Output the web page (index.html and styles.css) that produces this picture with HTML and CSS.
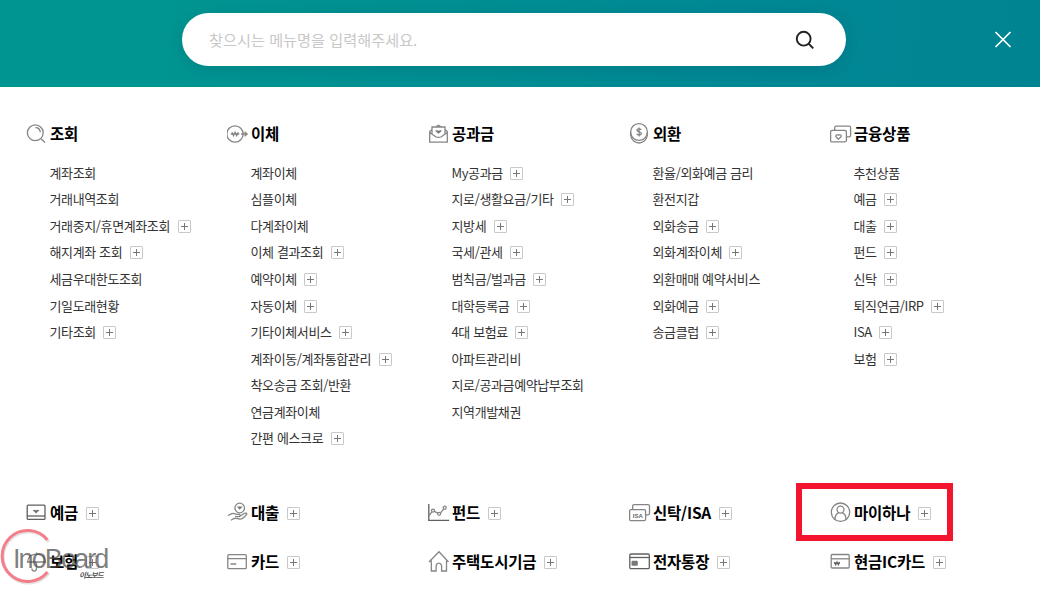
FILE: index.html
```
<!DOCTYPE html>
<html lang="ko">

<head>
    <meta charset="UTF-8">
    <meta name="viewport" content="width=device-width, initial-scale=1.0">
    <title>전체메뉴</title>
    <link rel="stylesheet" href="styles.css">
</head>

<body>
    <header class="top">
        <form class="search">
            <input type="text" placeholder="찾으시는 메뉴명을 입력해주세요.">
            <button type="button" class="search-btn" aria-label="검색">
                <svg width="20" height="20" viewBox="0 0 20 20"><circle cx="8.7" cy="8.7" r="6.9"/><path d="M13.5 13.5l4.7 4.9"/></svg>
            </button>
        </form>
        <button type="button" class="close-btn" aria-label="닫기">
            <svg width="18" height="18" viewBox="0 0 18 18"><path d="M1.500 1l15 15M16.500 1l-15 15"/></svg>
        </button>
    </header>

    <main class="sitemap">
        <div class="menu">
            <section>
                <h2><svg class="icon" viewBox="0 0 24 24"><circle cx="9.300" cy="10.800" r="7.900"/><path d="M15 16.700l4 3.800M9.500 5.500c2.800.2 4.600 2 4.800 4.800"/></svg>조회</h2>
                <ul>
                    <li>계좌조회</li>
                    <li>거래내역조회</li>
                    <li>거래중지/휴면계좌조회<i class="plus"></i></li>
                    <li>해지계좌 조회<i class="plus"></i></li>
                    <li>세금우대한도조회</li>
                    <li>기일도래현황</li>
                    <li>기타조회<i class="plus"></i></li>
                </ul>
            </section>
            <section>
                <h2><svg class="icon" viewBox="0 0 24 24"><circle cx="8" cy="12" r="8.200"/><path d="M14 12h6M17.600 9.700l2.500 2.300-2.500 2.300M3.800 12h8.500M5 10.200l1.500 3.400 1.600-3.400 1.600 3.400 1.500-3.400"/></svg>이체</h2>
                <ul>
                    <li>계좌이체</li>
                    <li>심플이체</li>
                    <li>다계좌이체</li>
                    <li>이체 결과조회<i class="plus"></i></li>
                    <li>예약이체<i class="plus"></i></li>
                    <li>자동이체<i class="plus"></i></li>
                    <li>기타이체서비스<i class="plus"></i></li>
                    <li>계좌이동/계좌통합관리<i class="plus"></i></li>
                    <li>착오송금 조회/반환</li>
                    <li>연금계좌이체</li>
                    <li>간편 에스크로<i class="plus"></i></li>
                </ul>
            </section>
            <section>
                <h2><svg class="icon" viewBox="0 0 24 24"><path d="M4 7.500L1.700 9.500v10.700h17.600V9.500L17 7.500M4 12V5h13v7M8 4.800l2.500-1.600L13 4.800M1.700 10.500l6 4.200q2.800 1.500 5.600 0l6-4.200"/><path class="fill" d="M7 8.700q1.700-1 3.500 0 1.800-1 3.500 0l-3.500 3z"/></svg>공과금</h2>
                <ul>
                    <li>My공과금<i class="plus"></i></li>
                    <li>지로/생활요금/기타<i class="plus"></i></li>
                    <li>지방세<i class="plus"></i></li>
                    <li>국세/관세<i class="plus"></i></li>
                    <li>범칙금/벌과금<i class="plus"></i></li>
                    <li>대학등록금<i class="plus"></i></li>
                    <li>4대 보험료<i class="plus"></i></li>
                    <li>아파트관리비</li>
                    <li>지로/공과금예약납부조회</li>
                    <li>지역개발채권</li>
                </ul>
            </section>
            <section>
                <h2><svg class="icon" viewBox="0 0 24 24"><circle cx="10" cy="10" r="8.400"/><path d="M1.600 10v3.200c1.800 10.400 15 10.400 16.800 0V10"/><path d="M12.200 8c-.8-1.600-4.200-1.500-4.200.3 0 2.200 4.400 1.100 4.400 3.300 0 1.900-3.700 2-4.600.2M10.100 5.500v9"/></svg>외환</h2>
                <ul>
                    <li>환율/외화예금 금리</li>
                    <li>환전지갑</li>
                    <li>외화송금<i class="plus"></i></li>
                    <li>외화계좌이체<i class="plus"></i></li>
                    <li>외환매매 예약서비스</li>
                    <li>외화예금<i class="plus"></i></li>
                    <li>송금클럽<i class="plus"></i></li>
                </ul>
            </section>
            <section>
                <h2><svg class="icon" viewBox="0 0 24 24"><path d="M4.700 8V5.800q0-1.600 1.600-1.600h12.900q1.400 0 1.400 1.600v7.400q0 1.600-1.600 1.600h-2.500"/><rect x=".6" y="8.300" width="15.800" height="11.600" rx="1.500"/><path d="M8.500 17.200l-2.600-2.600q-.6-2.400 2.600-1.600 3.200-.8 2.600 1.600z"/></svg>금융상품</h2>
                <ul>
                    <li>추천상품</li>
                    <li>예금<i class="plus"></i></li>
                    <li>대출<i class="plus"></i></li>
                    <li>펀드<i class="plus"></i></li>
                    <li>신탁<i class="plus"></i></li>
                    <li>퇴직연금/IRP<i class="plus"></i></li>
                    <li>ISA<i class="plus"></i></li>
                    <li>보험<i class="plus"></i></li>
                </ul>
            </section>
        </div>

        <div class="menu more">
            <h2><svg class="icon" viewBox="0 0 24 24"><g class="dark"><rect x="1.200" y="4.200" width="17.800" height="14.200" rx="1"/><path d="M1.200 15h17.800"/></g><path class="fill" d="M6.800 9.200q1.600-1 3.300 0 1.700-1 3.300 0l-3.300 3.200z"/></svg>예금<i class="plus"></i></h2>
            <h2><svg class="icon" viewBox="0 0 24 24"><circle cx="12.700" cy="7" r="4.800"/><path class="fill" d="M9.800 5.500h5.800l-2.900 3.200z"/><path d="M.8 14.500l3.600-1.700q2.300-.9 4.300.4l3.500.1q2 .8.200 2.300H8M12.500 15.500l5-3.200q2.300-.8 2.300.8-3.800 5-6.800 5.100-3.400-1-6-.7L4 19.200"/></svg>대출<i class="plus"></i></h2>
            <h2><svg class="icon" viewBox="0 0 24 24"><path class="dark" d="M.8 3v16.300h20.400"/><path d="M1 14.500l3-3.600M6.300 10.400l3.500 1.800M12.600 11.800l3.200-4"/><circle cx="5" cy="9.600" r="1.500"/><circle cx="11.100" cy="12.800" r="1.500"/><circle cx="16.700" cy="6.700" r="1.500"/></svg>펀드<i class="plus"></i></h2>
            <h2><svg class="icon" viewBox="0 0 24 24"><path d="M3.700 8.500V5.200q0-1.500 1.500-1.500h13.800q1.500 0 1.500 1.500v7q0 1.600-1.600 1.600h-2"/><rect x=".6" y="8.700" width="16" height="11" rx="1.500"/><text x="3.800" y="16.500">ISA</text></svg>신탁/ISA<i class="plus"></i></h2>
            <h2 class="marked"><svg class="icon" viewBox="0 0 24 24"><circle cx="10.500" cy="11.200" r="9.200"/><circle cx="10.500" cy="8.600" r="3.500"/><path d="M5 18.400c0-3.200.8-5.300 3.700-6.700M16 18.400c0-3.200-.8-5.300-3.700-6.700"/></svg>마이하나<i class="plus"></i></h2>
            <h2><svg class="icon" viewBox="0 0 24 24"><path d="M1.500 12c.8-10.500 17-10.500 18 0zM10.500 2.500V4M10.500 12v6.500q0 2.500-2.300 2.500t-2.300-2.500"/></svg>보험<i class="plus"></i></h2>
            <h2><svg class="icon" viewBox="0 0 24 24"><rect x=".8" y="4.700" width="18.500" height="14" rx="1.200"/><path d="M.8 8.700h18.500M3.500 14h5.800"/></svg>카드<i class="plus"></i></h2>
            <h2><svg class="icon" viewBox="0 0 24 24"><path d="M1 12L11 1.800 20.500 12M3.300 10.500V21h4.800v-5.500q.6-2.300 2.700-2.300t2.800 2.300V21h4.900V10.500"/></svg>주택도시기금<i class="plus"></i></h2>
            <h2><svg class="icon" viewBox="0 0 24 24"><g class="dark"><rect x=".8" y="4" width="19.500" height="14.700" rx="1.200"/><path d="M.8 7.500h19.500"/></g><rect class="fill" x="2.500" y="10.800" width="6.300" height="5" rx="1"/></svg>전자통장<i class="plus"></i></h2>
            <h2><svg class="icon" viewBox="0 0 24 24"><rect x="1.200" y="4.500" width="18" height="13.500" rx="1"/><path d="M1.200 8.800h18"/><path class="dark" d="M4.500 12l1.200 2.700 1.300-2.700 1.300 2.700 1.200-2.700M4 13.200h6"/></svg>현금IC카드<i class="plus"></i></h2>
        </div>
    </main>

    <div class="watermark">
        <svg width="56" height="60" viewBox="0 0 56 60"><path class="shade" d="M49 14A25.500 25.500 0 1 0 49 45"/><path class="ring" d="M47.500 12A25.500 25.500 0 1 0 47.500 44"/></svg>
        <span class="wm-name">InoBoard</span>
        <span class="wm-sub">이노보드</span>
    </div>
</body>

</html>
```
FILE: styles.css
```
*,
*::after {
    box-sizing: border-box;
}

body {
    margin: 0;
    height: 600px;
    overflow: hidden;
    position: relative;
    background-color: #fff;
    font-family: "Noto Sans CJK KR", sans-serif;
    color: #333;
}

h2,
ul {
    margin: 0;
    padding: 0;
}

button {
    padding: 0;
    border: none;
    background: none;
    cursor: pointer;
}

svg {
    display: block;
    fill: none;
}

/* search bar */
.top {
    display: flex;
    justify-content: space-between;
    align-items: center;
    height: 87px;
    padding: 0 28px 8px 182px;
    background: linear-gradient(100deg, #009590 15%, #008795 75%, #008492);
}

.search {
    display: flex;
    align-items: center;
    width: 664px;
    height: 53px;
    padding: 0 31px 0 27px;
    border-radius: 27px;
    background-color: #fff;
    box-shadow: 0 3px 14px rgba(0, 70, 90, 0.2);
}

.search input {
    flex: 1;
    padding: 0 0 2px;
    border: none;
    outline: none;
    font-family: inherit;
    font-size: 15.2px;
}

.search input::placeholder {
    color: #c8c8c8;
}

.search-btn svg {
    stroke: #222;
    stroke-width: 1.9;
}

.close-btn svg {
    stroke: #fff;
    stroke-width: 1.7;
}

/* menu columns */
.menu {
    display: grid;
    grid-template-columns: repeat(5, 201px);
    padding-left: 26px;
}

.menu:first-child {
    height: 402px;
    padding-top: 35px;
}

h2 {
    display: flex;
    align-items: center;
    height: 24px;
    padding-bottom: 2px;
    font-size: 15.5px;
    font-weight: 700;
    letter-spacing: -0.2px;
    color: #000;
    white-space: nowrap;
}

ul {
    padding: 14px 0 0 23.5px;
    list-style: none;
}

li {
    display: flex;
    align-items: center;
    height: 26.57px;
    padding-bottom: 2px;
    font-size: 13px;
    letter-spacing: -0.38px;
    white-space: nowrap;
}

.icon {
    flex: none;
    width: 24px;
    height: 24px;
    margin-top: 2px;
    stroke: #858585;
    stroke-width: 1.3;
}

.icon .dark {
    stroke: #606060;
}

.icon .fill {
    fill: #777;
    stroke: none;
}

.icon text {
    fill: #666;
    stroke: none;
    font: 700 6px "Liberation Sans", sans-serif;
    letter-spacing: 0;
}

.plus {
    flex: none;
    width: 13px;
    height: 13px;
    margin: 2px 0 0 7.5px;
    border: 1px solid #c9c9c9;
    border-radius: 1px;
    background:
        linear-gradient(#777, #777) center / 7px 1px no-repeat,
        linear-gradient(#777, #777) center / 1px 7px no-repeat;
}

.more {
    grid-auto-rows: 24px;
    row-gap: 25px;
    padding-top: 12px;
}

.marked {
    position: relative;
}

.marked::after {
    content: "";
    position: absolute;
    top: -18px;
    left: -34px;
    width: 157px;
    height: 58px;
    border: 6px solid #f3152d;
}

/* site mark laid over the corner */
.watermark {
    position: absolute;
    left: 0;
    top: 528px;
    width: 112px;
    height: 60px;
}

.watermark .ring {
    stroke: #f47f8b;
    stroke-width: 3;
}

.watermark .shade {
    stroke: #e4e4e4;
    stroke-width: 3;
}

.wm-name {
    position: absolute;
    left: 13px;
    top: 15px;
    font: 27px/32px "Liberation Sans", sans-serif;
    letter-spacing: -1.9px;
    color: rgba(70, 70, 70, 0.7);
}

.wm-sub {
    position: absolute;
    left: 79px;
    top: 41px;
    font-size: 7.5px;
    line-height: 12px;
    font-style: italic;
    font-weight: 700;
    letter-spacing: -1px;
    color: #555;
}
```
